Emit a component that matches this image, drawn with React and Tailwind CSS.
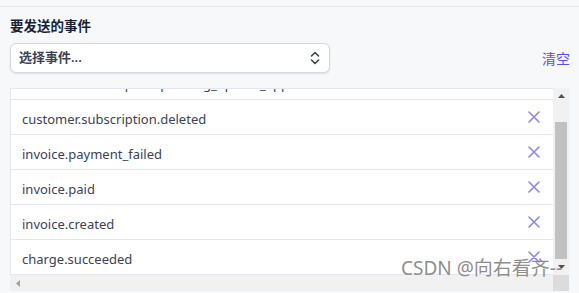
import React, { useLayoutEffect, useRef } from 'react';

const events = [
    'customer.subscription.pending_update_applied',
    'customer.subscription.deleted',
    'invoice.payment_failed',
    'invoice.paid',
    'invoice.created',
    'charge.succeeded',
];

const ChevronUpDown = () => (
    <svg width="10" height="14" viewBox="0 0 10 14" fill="none" stroke="#3c4257" strokeWidth="1.6" strokeLinecap="round" strokeLinejoin="round">
        <path d="M1.5 5 L5 1.5 L8.5 5" />
        <path d="M1.5 9 L5 12.5 L8.5 9" />
    </svg>
);

const Cross = () => (
    <svg width="12" height="12" viewBox="0 0 12 12" stroke="#8c86f2" strokeWidth="1.6" strokeLinecap="round">
        <path d="M1 1 L11 11 M11 1 L1 11" />
    </svg>
);

// small triangle used on the scrollbar buttons
const Arrow = ({ dir }) => {
    const pts = {
        up: '1,6 4.5,2 8,6',
        down: '1,2 4.5,6 8,2',
        left: '6,1 2,4.5 6,8',
    }[dir];
    return (
        <svg width="9" height="9" viewBox="0 0 9 9">
            <polygon points={pts} fill={dir === 'left' ? '#a3a3a3' : '#505050'} />
        </svg>
    );
};

const App = () => {
    const listRef = useRef(null);

    // list is shown scrolled to its end
    useLayoutEffect(() => {
        if (listRef.current) listRef.current.scrollTop = listRef.current.scrollHeight;
    }, []);

    return (
        <div className="relative w-[579px] h-[293px] overflow-hidden bg-[#f6f8fa] font-['Noto_Sans','Noto_Sans_CJK_SC',sans-serif] text-[#1a1f36]">
            <div className="h-[7px] border-b border-[#e6e8eb]" />

            <div className="pl-[10px] pr-[10px]">
                <h3 className="mt-[11px] text-[13.5px] font-bold leading-[17px] text-[#1a1f36]">要发送的事件</h3>

                <div className="mt-[8px] flex items-center justify-between">
                    <button className="w-[320px] h-[30px] flex items-center justify-between pl-[8px] pr-[9px] bg-white rounded-md border border-[#d5d8de] shadow-[0_1px_2px_rgba(60,66,87,0.12)]">
                        <span className="text-[13px] font-semibold text-[#3c4257]">选择事件...</span>
                        <ChevronUpDown />
                    </button>
                    <span className="text-[14px] text-[#5851ea] mr-[-1px]">清空</span>
                </div>

                <div className="mt-[15px] w-[559px] flex flex-col">
                    <div className="flex h-[187px]">
                        <div ref={listRef} className="w-[543px] overflow-hidden bg-white border-l border-t border-[#e3e8ee]">
                            {events.map((ev) => (
                                <div key={ev} className="h-[35px] flex items-center justify-between pl-[11px] pr-[13px] border-b border-[#e3e8ee]">
                                    <span className="mt-[5px] text-[13px] text-[#3c4257] whitespace-nowrap">{ev}</span>
                                    <Cross />
                                </div>
                            ))}
                        </div>
                        <div className="w-[16px] flex flex-col bg-[#f1f1f1]">
                            <div className="h-[16px] flex items-center justify-center"><Arrow dir="up" /></div>
                            <div className="flex-1 flex flex-col justify-end">
                                <div className="h-[137px] mx-[2px] bg-[#c1c1c1]" />
                            </div>
                            <div className="h-[16px] flex items-center justify-center"><Arrow dir="down" /></div>
                        </div>
                    </div>
                    <div className="flex h-[16px]">
                        <div className="w-[543px] flex items-center pl-[4px] bg-[#f1f1f1]"><Arrow dir="left" /></div>
                        <div className="w-[16px] bg-[#dcdcdc]" />
                    </div>
                </div>
            </div>

            {/* watermark */}
            <span className="absolute left-[401px] top-[255px] text-[19px] leading-[26px] text-[#8e8e8e] whitespace-nowrap pointer-events-none">
                CSDN @向右看齐--
            </span>
        </div>
    );
};

export default App;
